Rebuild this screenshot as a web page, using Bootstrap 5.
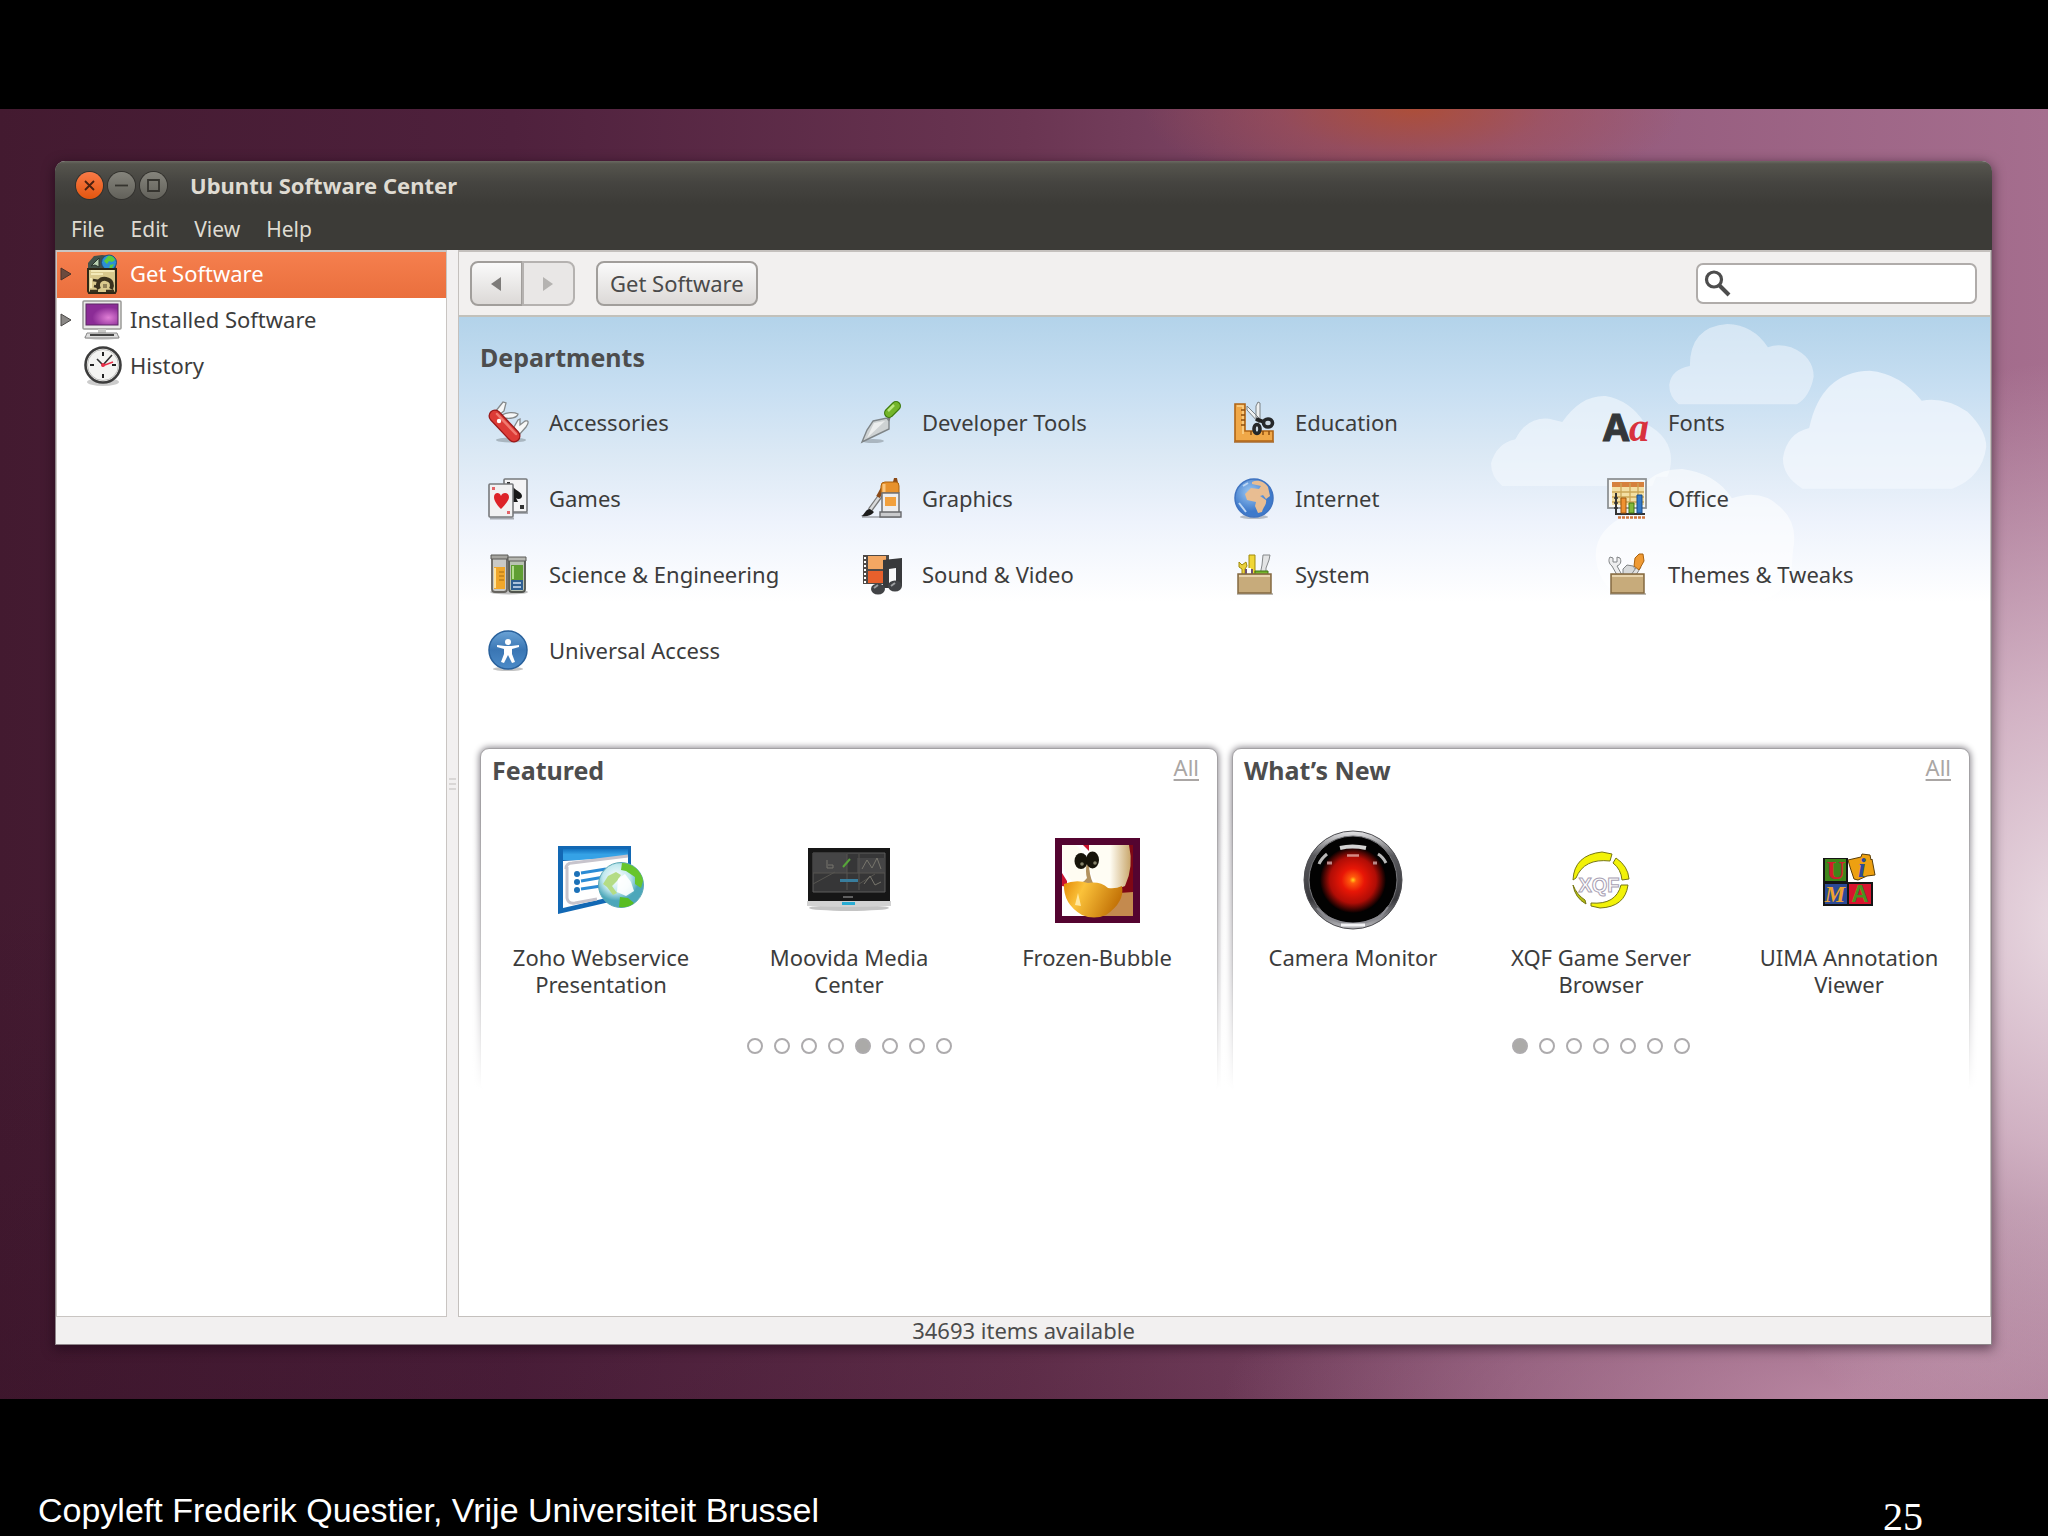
<!DOCTYPE html>
<html lang="en">
<head>
<meta charset="utf-8">
<meta name="viewport" content="width=device-width, initial-scale=1">
<title>Ubuntu Software Center</title>
<link href="https://cdn.jsdelivr.net/npm/bootstrap@5.3.0/dist/css/bootstrap.min.css" rel="stylesheet">
<style>
body { background: #000; color: #3c3c3c; font-family: "Noto Sans", "Open Sans", sans-serif; font-size: 22px; line-height: 27px; padding-top: 109px; }
a { color: inherit; text-decoration: none; }
svg { display: block; flex: none; overflow: visible; }
svg.sky { overflow: hidden; }
.wallpaper {
  padding: 52px 56px 54px 55px;
  background:
    radial-gradient(ellipse 270px 90px at 69% 0, rgba(176,78,52,.9), rgba(165,78,80,.5) 50%, transparent),
    radial-gradient(ellipse 420px 560px at 101% 63%, #e9dae2, rgba(222,196,210,.8) 40%, transparent),
    radial-gradient(ellipse 620px 200px at 90% 100%, rgba(196,146,172,.8), transparent),
    linear-gradient(180deg, transparent 60%, rgba(40,8,30,.2)),
    linear-gradient(90deg, #431a30 0, #4f213d 25%, #6a3552 50%, #92587a 74%, #a56e8e 100%);
}
.app-window { border-radius: 10px 10px 0 0; background: #f2f0f0; border: 1px solid #8f858a; border-top: 0; box-shadow: 0 3px 12px 1px rgba(20,0,15,.5); }
.app-head { background: linear-gradient(#6a6961 0, #55544d 3px, #454440 22px, #3c3b37 44px); border-radius: 10px 10px 0 0; color: #dfdbd2; margin: 0 -1px; }
.title-bar { height: 48px; padding-left: 21px; gap: 5px; }
.title-bar h1 { font-size: 22px; line-height: 27px; font-weight: 700; margin: 0 0 0 18px; }
.win-btn { width: 27px; height: 27px; border: 0; padding: 0; border-radius: 50%; background: linear-gradient(#85847c, #62615a); box-shadow: 0 0 0 1px #33322e; }
.win-btn.closer { background: linear-gradient(#f97a47, #e4560f); }
.menu-bar { height: 41px; padding-left: 16px; gap: 26px; }
.menu-bar a { font-size: 21px; }
.side-pane { width: 391px; border: 2px solid #c9c5c2; border-width: 2px 1px 1px 1px; background: #fff; }
.side-row { height: 46px; padding: 0 0 3px 3px; gap: 10px; }
.side-row .side-name { margin-left: -2px; }
.side-row.chosen { background: linear-gradient(#f57f4e, #ea6f3d); color: #fff; }
.twist { width: 12px; }
.splitter { width: 11px; }
.main-pane { flex: 1 1 0; min-width: 0; border: 1px solid #c4c0bd; border-width: 2px 1px 1px 1px; background: #fff; }
.tool-bar { height: 65px; padding: 0 13px 0 11px; gap: 21px; border-bottom: 2px solid #c2c1bb; background: #f2f0ef; }
.tool-btn { height: 45px; border: 2px solid #a19e9b; border-radius: 8px; background: linear-gradient(#fafafa, #dcd9d7); color: #4a4a4a; font-size: 22px; line-height: 27px; padding: 0 12px; }
.nav-pair .tool-btn { width: 53px; padding: 0 18px; }
.nav-pair .tool-btn:disabled { background: #e9e7e6; border-color: #b5b2b0; opacity: 1; }
.search-wrap { width: 281px; }
.search-wrap input { height: 41px; padding: 0 10px 0 44px; border: 2px solid #b0acaa; border-radius: 7px; font-size: 22px; background: #fff; }
.search-wrap svg { position: absolute; left: 8px; top: 7px; }
.store { background: linear-gradient(#b3d3ea 0, #c8dff2 74px, #dce9f5 140px, #eef3fc 205px, #fff 285px); }
.sky { position: absolute; right: 0; top: 0; }
.store h2 { font-size: 25px; line-height: 32px; font-weight: 700; color: #4d4d4d; margin: 0; }
.departments { padding: 24px 10px 0 21px; height: 431px; }
.departments ul { padding-left: 8px; margin-top: 11px; }
.departments li a { height: 76px; gap: 20px; }
.shelves { gap: 14px; padding: 0 20px 0 21px; }
.shelf { height: 345px; flex: 1 1 0; border: 1px solid #a3a1a4; border-radius: 9px; box-shadow: 0 0 6px 1px #8f8c92; background: #fff; }
.shelf::after { content: ""; position: absolute; inset: 60px -12px -12px; background: linear-gradient(rgba(255,255,255,0), rgba(255,255,255,.45) 55%, #fff 95%); }
.shelf > * { position: relative; z-index: 1; }
.shelf-head { padding: 5px 18px 0 11px; }
.shelf-head a { color: #aaa6a4; text-decoration: underline; text-underline-offset: 3px; line-height: 26px; }
.picks { --bs-gutter-x: 8px; margin-top: 43px; }
.picks .art { height: 102px; margin-bottom: 13px; }
.picks .label-text { height: 54px; }
.pager { gap: 11px; margin-top: 40px; }
.pager button { width: 16px; height: 16px; border-radius: 50%; border: 2px solid #adabad; background: #fff; padding: 0; }
.pager button.now { background: #abaaa8; }
.status { height: 27px; font-size: 22px; line-height: 27px; color: #4c4c4c; }
.slide-foot { height: 137px; color: #fff; padding: 0 125px 0 38px; }
.slide-foot .credit { font: 34px/40px "Liberation Sans", Arial, sans-serif; padding-top: 91px; }
.slide-foot .page-no { font: 40px/46px "Liberation Serif", serif; padding-top: 95px; }
</style>
</head>
<body class="min-vh-100 d-flex flex-column">

<div class="wallpaper flex-grow-1 d-flex">
<main class="app-window flex-grow-1 d-flex flex-column">
  <header class="app-head">
    <div class="title-bar d-flex align-items-center">
      <button class="win-btn closer" aria-label="Close"><svg width="27" height="27" viewBox="0 0 27 27"><path d="M9 9l9 9M18 9l-9 9" stroke="#4a2010" stroke-width="1.8"/></svg></button>
      <button class="win-btn" aria-label="Minimize"><svg width="27" height="27" viewBox="0 0 27 27"><path d="M7 13.500h13" stroke="#35342f" stroke-width="1.8"/></svg></button>
      <button class="win-btn" aria-label="Maximize"><svg width="27" height="27" viewBox="0 0 27 27"><path d="M8 8h11v11H8z" fill="none" stroke="#35342f" stroke-width="1.8"/></svg></button>
      <h1>Ubuntu Software Center</h1>
    </div>
    <nav class="menu-bar d-flex align-items-center">
      <a href="#">File</a><a href="#">Edit</a><a href="#">View</a><a href="#">Help</a>
    </nav>
  </header>

  <div class="d-flex flex-grow-1">
    <nav class="side-pane flex-shrink-0">
      <a href="#" class="side-row chosen d-flex align-items-center">
        <svg class="twist" width="12" height="14" viewBox="0 0 12 14"><path d="M1 1l10 6-10 6z" fill="#6b4a3e" stroke="#4a332b"/></svg>
        <svg width="40" height="42" viewBox="0 0 40 42"><path d="M6 10l6-7 8-1 10 1 4 5v9H6z" fill="#42524a"/><circle cx="27" cy="9.500" r="7.500" fill="#2c8fd6" stroke="#1d4c78"/><path d="M26 3c3-1 6 1 7 4l-3 2-3-1-2 3-3-3zM28 12l4-1-2 4-3 1z" fill="#5ccb3c"/><path d="M9 13l8-8v9l-4-2z" fill="#b8d0b0" stroke="#29352c"/><path d="M6 16h28v22l-1 2H7l-1-2z" fill="#d9c98d" stroke="#2e2817" stroke-width="2"/><path d="M9 18h23M9 21h12M9 25v10" stroke="#f3e9b8" stroke-width="2"/><path d="M17 36c-3-6 1-11 7-10s7 6 5 10" fill="none" stroke="#3a321e" stroke-width="4"/><path d="M11 27l6 1M12 33l4 1M8 38h8M24 38h8" stroke="#3a321e" stroke-width="2.500"/><path d="M21 33h4" stroke="#8f8158" stroke-width="4"/></svg>
        <span class="side-name">Get Software</span>
      </a>
      <a href="#" class="side-row d-flex align-items-center">
        <svg class="twist" width="12" height="14" viewBox="0 0 12 14"><path d="M1 1l10 6-10 6z" fill="#8a8886" stroke="#4a4846"/></svg>
        <svg width="40" height="42" viewBox="0 0 40 42"><defs><radialGradient id="scr" cx=".7" cy=".65"><stop offset="0" stop-color="#e07fd6"/><stop offset="1" stop-color="#8b2c96"/></radialGradient></defs><ellipse cx="20" cy="38" rx="18" ry="3" fill="#d8d8d8"/><rect x="1" y="2" width="38" height="28" rx="1" fill="#e9e9e7" stroke="#9a9a98" stroke-width="1.500"/><rect x="4" y="5" width="32" height="21" fill="url(#scr)" stroke="#5d2765"/><path d="M16 30h8v4h-8z" fill="#c9c9c7"/><path d="M5 34h30l2 5H3z" fill="#ddd" stroke="#888"/><path d="M8 36h24" stroke="#444" stroke-width="2"/></svg>
        <span class="side-name">Installed Software</span>
      </a>
      <a href="#" class="side-row d-flex align-items-center">
        <span class="twist"></span>
        <svg width="40" height="42" viewBox="0 0 40 42"><ellipse cx="21" cy="37" rx="16" ry="4" fill="#ccc"/><circle cx="21" cy="20" r="17.500" fill="#f4f4f2" stroke="#3c3c3c" stroke-width="2.600"/><circle cx="21" cy="20" r="15.500" fill="none" stroke="#bdbdbb"/><path d="M21 7v4M21 29v4M8 20h4M30 20h4" stroke="#222" stroke-width="2"/><path d="M15 14l6 6 9-10" fill="none" stroke="#333" stroke-width="1.600"/><path d="M20 21l11-4" stroke="#e8304a" stroke-width="1.600"/><circle cx="21" cy="20" r="2" fill="#e8304a"/></svg>
        <span class="side-name">History</span>
      </a>
    </nav>

    <div class="splitter flex-shrink-0 d-flex align-items-center justify-content-center">
      <svg width="7" height="14" viewBox="0 0 7 14"><path d="M0 2h7M0 7h7M0 12h7" stroke="#c0bdbb"/></svg>
    </div>

    <section class="main-pane d-flex flex-column">
      <div class="tool-bar d-flex align-items-center">
        <div class="btn-group nav-pair" role="group" aria-label="History">
          <button class="btn tool-btn" aria-label="Back"><svg width="12" height="14" viewBox="0 0 12 14"><path d="M11 0v14L1 7z" fill="#7d7b79"/></svg></button>
          <button class="btn tool-btn" disabled aria-label="Forward"><svg width="12" height="14" viewBox="0 0 12 14"><path d="M1 0v14l10-7z" fill="#b5b3b1"/></svg></button>
        </div>
        <button class="btn tool-btn">Get Software</button>
        <div class="search-wrap position-relative ms-auto">
          <input type="search" class="form-control" aria-label="Search">
          <svg width="28" height="28" viewBox="0 0 28 28"><circle cx="10" cy="9.500" r="7.500" fill="none" stroke="#4d4d4d" stroke-width="3.200"/><path d="M15 15l10 10" stroke="#4d4d4d" stroke-width="4"/></svg>
        </div>
      </div>

      <div class="store flex-grow-1 position-relative">
        <svg class="sky" width="502" height="290" viewBox="72 261 1338 870" preserveAspectRatio="none" aria-hidden="true">
          <g fill="#f4f8fe">
            <path opacity=".52" d="M580 523Q555 500 555 465Q560 418 610 408Q610 290 710 282Q780 285 818 352Q845 340 880 352Q940 380 940 440Q930 500 895 523Z"/>
            <path opacity=".7" d="M910 776Q858 740 858 685Q868 610 928 594Q960 425 1090 422Q1170 430 1228 512Q1290 500 1350 545Q1400 600 1400 650Q1390 740 1310 776Z"/>
            <path opacity=".6" d="M110 768Q80 740 80 700Q95 640 145 628Q175 560 235 566L270 576Q320 495 385 498Q450 510 490 580Q560 620 560 690Q560 715 550 740L520 740L510 768Z"/>
            <path fill="#fff" opacity=".55" d="M360 990Q350 900 450 850Q480 715 590 717Q680 730 722 805Q800 775 850 830Q900 880 885 960L880 1040Q850 1100 800 1110H450Q370 1080 360 990Z"/>
          </g>
        </svg>

        <section class="departments position-relative">
          <h2>Departments</h2>
          <ul class="row gx-0 list-unstyled mb-0">
            <li class="col-3"><a href="#" class="d-flex align-items-center">
              <svg width="41" height="41" viewBox="0 0 41 41"><ellipse cx="23" cy="38" rx="15" ry="2.500" fill="#a9b6c0"/><g fill="#f6f7f7" stroke="#85898b" stroke-width="1.300"><path d="M7 10l8-10 3 1-2 8-5 4z"/><path d="M14 13c5-3 12-3 16-1-1 4-8 5-14 4z"/><path d="M26 25l4-7 2-1v6l5-4c4-1 4 2 1 6l-7 8z"/></g><path d="M7 14L26 34" stroke="#99191a" stroke-width="13" stroke-linecap="round"/><path d="M7 14L26 34" stroke="#dd3b36" stroke-width="10.500" stroke-linecap="round"/><path d="M9 12l19 20" stroke="#f17a70" stroke-width="2.500" stroke-linecap="round"/><circle cx="11" cy="19" r="2.200" fill="#fff"/></svg>
              <span>Accessories</span></a></li>
            <li class="col-3"><a href="#" class="d-flex align-items-center">
              <svg width="41" height="41" viewBox="0 0 41 41"><ellipse cx="12" cy="39" rx="11" ry="2" fill="#aab6c0"/><path d="M29 12l-2 7" stroke="#777" stroke-width="3"/><path d="M12 19l14-3 2 3v8L1 40 6 28z" fill="#ced2d3" stroke="#7e8487" stroke-width="1.400"/><path d="M13 21l11-2-18 17z" fill="#eceeee"/><path d="M28 11L35 4" stroke="#3c7a0c" stroke-width="10" stroke-linecap="round"/><path d="M28 11L35 4" stroke="#73b52a" stroke-width="7.500" stroke-linecap="round"/><path d="M27 9l6-6" stroke="#b9e67e" stroke-width="2.500"/></svg>
              <span>Developer Tools</span></a></li>
            <li class="col-3"><a href="#" class="d-flex align-items-center">
              <svg width="41" height="41" viewBox="0 0 41 41"><path d="M0 40h40" stroke="#b48b62" stroke-width="2"/><path d="M1 2h10v27h28v10H1z" fill="#f0a848" stroke="#b06414" stroke-width="1.600"/><path d="M3 4h6v28" fill="none" stroke="#fbd48c" stroke-width="1.500"/><path d="M7 8h4M7 13h4M7 18h4M7 23h4M17 29v4M23 29v4M29 29v4M35 29v4" stroke="#8c4e0f" stroke-width="1.500"/><path d="M13 4l14 14-2 3L13 8zM24 0l2 1v17l-4 1V4z" fill="#eff1f1" stroke="#7b8184"/><path d="M22 17l8 3" stroke="#222" stroke-width="4"/><ellipse cx="34" cy="21" rx="4.500" ry="4" fill="#ccd8e2" stroke="#26282a" stroke-width="3.600"/><ellipse cx="23" cy="27" rx="3" ry="4.500" fill="#ccd8e2" stroke="#26282a" stroke-width="3.600"/></svg>
              <span>Education</span></a></li>
            <li class="col-3"><a href="#" class="d-flex align-items-center">
              <svg width="41" height="41" viewBox="0 0 41 41"><text x="22" y="39" font-family="Liberation Serif, serif" font-style="italic" font-weight="700" font-size="40" fill="#d8323e">a</text><text x="-4" y="39" font-family="Noto Sans, sans-serif" font-weight="700" font-size="38" fill="#34373a" stroke="#34373a">A</text></svg>
              <span>Fonts</span></a></li>

            <li class="col-3"><a href="#" class="d-flex align-items-center">
              <svg width="41" height="41" viewBox="0 0 41 41"><path d="M2 40.500h24M25 35h15" stroke="#a7abb2" stroke-width="2"/><rect x="16" y="1" width="23" height="33" rx="1" fill="#f4f4f5" stroke="#77797c" stroke-width="1.600"/><path d="M25 9c3 4 9 5 9 9 0 3-4 4-6 2l2 4h-5z" fill="#171717"/><path d="M32 27h4v4h-4zM19 4h3v2h-3z" fill="#333"/><rect x="1" y="6" width="24" height="33" rx="1" fill="#f1f1f2" stroke="#77797c" stroke-width="1.600"/><path d="M13 31C8 26 6 22 6 19c0-5 6-5 7-1 1-4 8-4 8 1 0 3-3 7-8 12z" fill="#dd2328"/><path d="M4 9h3v3H4zM19 33h3v3h-3z" fill="#e46468"/></svg>
              <span>Games</span></a></li>
            <li class="col-3"><a href="#" class="d-flex align-items-center">
              <svg width="41" height="41" viewBox="0 0 41 41"><path d="M1 39h38" stroke="#b2b6bd" stroke-width="2"/><path d="M20 17L9 32" stroke="#777" stroke-width="5"/><path d="M19 18L9 32" stroke="#d9dadb" stroke-width="2.500"/><path d="M22 10l-5 9" stroke="#8a4a18" stroke-width="4"/><path d="M0 38c4-1 4-7 9-7l4 3c-3 4-8 5-13 4z" fill="#1c1c1c"/><path d="M32 4l1-4h3l1 5z" fill="#8b4a16"/><path d="M20 8q0-4 4-4h11q3 0 3 4v7H20z" fill="#e7912c" stroke="#a9610f"/><path d="M23 6v8" stroke="#f9c57d" stroke-width="3"/><path d="M21 15h17v20H21z" fill="#ededee" stroke="#707275" stroke-width="1.500"/><path d="M24 19h11v9H24z" fill="#f2a03c"/><path d="M19 34h21v5H19z" fill="#c9cacc" stroke="#68696c" stroke-width="1.400"/></svg>
              <span>Graphics</span></a></li>
            <li class="col-3"><a href="#" class="d-flex align-items-center">
              <svg width="41" height="41" viewBox="0 0 41 41"><defs><radialGradient id="sea" cx=".4" cy=".35"><stop offset="0" stop-color="#9cc8f2"/><stop offset="1" stop-color="#3f7acb"/></radialGradient></defs><ellipse cx="20" cy="39" rx="14" ry="2" fill="#b5bcc6"/><circle cx="20" cy="20" r="19" fill="url(#sea)" stroke="#3f73c0" stroke-width="1.500"/><path d="M18 4c6-3 13 0 16 5l2 9-4 3-3-4-3 1 6 4c1 5-3 7-4 12l-4 1-3-7 1-4-9-2-2-6 6-6 8 1 2-3-9-2z" fill="#e8bd92"/><path d="M5 25l7 9M9 8l5-3" stroke="#bcd6f4" stroke-width="2"/></svg>
              <span>Internet</span></a></li>
            <li class="col-3"><a href="#" class="d-flex align-items-center">
              <svg width="41" height="41" viewBox="0 0 41 41"><rect x="1" y="1" width="38" height="29" fill="#f6f6f3" stroke="#8e9294" stroke-width="1.800"/><path d="M5 4h32v5H5z" fill="#d5803d"/><path d="M5 9h32v18H5z" fill="#f3dfa3"/><path d="M5 14h32M5 19h32M5 24h32M14 5v22M23 5v22M31 5v22" stroke="#cba657" stroke-width="1.300"/><path d="M9 15v21h29" fill="none" stroke="#333" stroke-width="2"/><path d="M7 20h4M7 25h4M7 30h4" stroke="#333" stroke-width="1.500"/><path d="M14 20h5v15h-5z" fill="#ef9232" stroke="#a2560d"/><path d="M22 25h5v10h-5z" fill="#83b93c" stroke="#427711"/><path d="M30 17h5v18h-5z" fill="#3279c8" stroke="#174c8b"/><path d="M11 39.500h28" stroke="#d0763c" stroke-width="2.500" stroke-dasharray="3 1"/></svg>
              <span>Office</span></a></li>

            <li class="col-3"><a href="#" class="d-flex align-items-center">
              <svg width="41" height="41" viewBox="0 0 41 41"><ellipse cx="21" cy="38" rx="19" ry="2.500" fill="#c0c0c0"/><path d="M4 2h15v33q0 3-3 3H7q-3 0-3-3z" fill="#c9c9c6" stroke="#66645f" stroke-width="1.800"/><path d="M6 13h11v22H6z" fill="#f0a72b"/><path d="M7 14v20" stroke="#ffe39b" stroke-width="2"/><path d="M11 18h5M11 22h5M11 26h5" stroke="#a66d12"/><path d="M3 1h17v4H3z" fill="#a5a49f" stroke="#5b5a56"/><path d="M21 4h16v31q0 3-3 3H24q-3 0-3-3z" fill="#b9c2b3" stroke="#50544e" stroke-width="1.800"/><path d="M23 11h12v15H23z" fill="#5f9e33"/><path d="M25 12v13" stroke="#b0dc8a" stroke-width="2"/><path d="M23 26h12v10H23z" fill="#2e5f91"/><path d="M25 29h8M25 33h8" stroke="#d5e4f3" stroke-width="1.500"/><path d="M20 3h18v4H20z" fill="#b6b7b1" stroke="#5b5a56"/></svg>
              <span>Science &amp; Engineering</span></a></li>
            <li class="col-3"><a href="#" class="d-flex align-items-center">
              <svg width="41" height="41" viewBox="0 0 41 41"><path d="M2 1h26v29H2z" fill="#4f4a47"/><path d="M7 2h18v13H7z" fill="#f3a763"/><path d="M7 17h18v12H7z" fill="#e8602c"/><path d="M4 3v26" stroke="#fff" stroke-width="2" stroke-dasharray="2 2"/><path d="M22 6l19-2v28h-6V14l-7 1v19h-6z" fill="#38393b"/><path d="M28 15h6v14h-6z" fill="#f8f8f8"/><ellipse cx="17" cy="35" rx="7" ry="5.500" fill="#414346"/><ellipse cx="34" cy="32" rx="7" ry="5.500" fill="#414346"/><path d="M13 34l4-3M30 32l4-3" stroke="#9c9ea0" stroke-width="2"/></svg>
              <span>Sound &amp; Video</span></a></li>
            <li class="col-3"><a href="#" class="d-flex align-items-center">
              <svg width="41" height="41" viewBox="0 0 41 41"><path d="M3 40h36" stroke="#bdbab4" stroke-width="2"/><path d="M15 1h6v19h-6z" fill="#f0d638" stroke="#a08b0c"/><path d="M5 8l3 3 4-3 1 4-2 3v6H8v-6L5 13z" fill="#ead03c" stroke="#a08b0c"/><path d="M29 1h7l-1 5-3 8v7h-6l2-10z" fill="#e3e4e5" stroke="#85888a"/><path d="M11 15h8v6h-8z" fill="#6d5175"/><path d="M13 14h4v6h-4z" fill="#fff"/><path d="M21 17h13v4H21z" fill="#74b42c" stroke="#3e7410"/><path d="M4 20h33v19H4z" fill="#c7ab7b" stroke="#846a41" stroke-width="1.500"/><path d="M5 22h31" stroke="#e8d4ae" stroke-width="2"/></svg>
              <span>System</span></a></li>
            <li class="col-3"><a href="#" class="d-flex align-items-center">
              <svg width="41" height="41" viewBox="0 0 41 41"><path d="M3 40h36" stroke="#bdbab4" stroke-width="2"/><path d="M3 3l3 1v4h4V3l3 1c2 4 0 7-3 8l5 9h-5L5 12C2 10 1 6 3 3z" fill="#ededee" stroke="#818486"/><path d="M16 21v-6l4-4 6 1 3 4v5z" fill="#d7d9da" stroke="#808385"/><path d="M24 21l7-10 3 2-5 8z" fill="#e0e1e2" stroke="#888"/><path d="M27 12l1-8 4-4h4l1 7-5 9z" fill="#ef9a34" stroke="#a96210"/><path d="M4 20h33v19H4z" fill="#c7ab7b" stroke="#846a41" stroke-width="1.500"/><path d="M5 22h31" stroke="#e8d4ae" stroke-width="2"/></svg>
              <span>Themes &amp; Tweaks</span></a></li>

            <li class="col-3"><a href="#" class="d-flex align-items-center">
              <svg width="41" height="41" viewBox="0 0 41 41"><defs><linearGradient id="ua" x2="0" y2="1"><stop offset="0" stop-color="#6aa3d6"/><stop offset=".5" stop-color="#3a76b4"/><stop offset="1" stop-color="#4c8bc8"/></linearGradient></defs><ellipse cx="20" cy="39" rx="15" ry="2" fill="#c4c4c4"/><circle cx="20" cy="20" r="19" fill="url(#ua)" stroke="#28609b" stroke-width="1.500"/><circle cx="20" cy="12" r="3" fill="#fff"/><path d="M9 15l8 1h6l8-1v2l-7 2v5l3 8-3 1-4-8-4 8-3-1 3-8v-5l-7-2z" fill="#fff"/></svg>
              <span>Universal Access</span></a></li>
          </ul>
        </section>

        <div class="shelves d-flex position-relative">
          <section class="shelf position-relative">
            <div class="shelf-head d-flex justify-content-between"><h2>Featured</h2><a href="#">All</a></div>
            <div class="picks row text-center">
              <a href="#" class="col-4">
                <span class="art d-flex align-items-center justify-content-center">
                  <svg width="86" height="70" viewBox="0 0 86 70"><defs><linearGradient id="zb" x2="0" y2="1"><stop offset="0" stop-color="#1373c0"/><stop offset=".5" stop-color="#35a2e6"/></linearGradient><radialGradient id="zg" cx=".4" cy=".35"><stop offset="0" stop-color="#fff"/><stop offset=".6" stop-color="#c2e9ee"/><stop offset="1" stop-color="#4ca7ba"/></radialGradient></defs><path d="M0 1h73v51L0 69z" fill="#1268b4"/><path d="M5 4h65v11H5z" fill="url(#zb)"/><path d="M5 16l65-4v36L5 63z" fill="#fff"/><path d="M8 24q0-6 6-6l56-7M9 22v31q1 6 8 5l22-4" fill="none" stroke="#c7c4cc" stroke-width="3"/><path d="M23 28l25-4M23 36l23-4M23 44l20-3" stroke="#2b8bd4" stroke-width="3"/><circle cx="19" cy="29" r="3" fill="#1c71b8"/><circle cx="19" cy="37" r="3" fill="#1c71b8"/><circle cx="19" cy="45" r="3" fill="#1c71b8"/><circle cx="63" cy="40" r="22.500" fill="url(#zg)" stroke="#5aa7b5"/><path d="M64 18c10 0 20 8 21 18l-2 7-6-4 0-7-9-6-5-1z" fill="#67c52d"/><path d="M50 31l8-4 5 3-4 6-5 5 5 7-4 2-6-8-4-3z" fill="#b4dc85"/><path d="M62 52l8 1 6 5c-4 4-10 5-15 4z" fill="#58bd22"/><path d="M60 34l7-5 6 8 3 9-8 5-9-4z" fill="#fff" opacity=".9"/></svg>
                </span><span class="label-text d-block">Zoho Webservice<br>Presentation</span></a>
              <a href="#" class="col-4">
                <span class="art d-flex align-items-center justify-content-center">
                  <svg width="84" height="68" viewBox="0 0 84 68"><ellipse cx="42" cy="62" rx="40" ry="3" fill="#c4c4c4"/><path d="M1 2h82v53H1z" fill="#161616"/><path d="M6 7h72v39H6z" fill="#363637" stroke="#5d5d5d"/><path d="M6 7h34v20H6zM50 12h28v15H50z" fill="#454546"/><path d="M6 27h72M40 8v36M52 8v36M6 38l22-12M52 38l16-10" stroke="#565550"/><path d="M20 14v8h6v-3h-5M55 23l5-9 5 8 5-10 4 11M57 38l6-8 5 9 6-3" fill="none" stroke="#77756c"/><path d="M36 21l7-8" stroke="#57a63a" stroke-width="2"/><path d="M33 33h18v3H33z" fill="#397e9d"/><path d="M0 55h84v5q-42 2-84 0z" fill="#d2d2d2"/><path d="M36 51h10" stroke="#aaa"/><path d="M35 56h13v3H35z" fill="#29acd3"/></svg>
                </span><span class="label-text d-block">Moovida Media<br>Center</span></a>
              <a href="#" class="col-4">
                <span class="art d-flex align-items-center justify-content-center">
                  <svg width="85" height="85" viewBox="0 0 85 85"><defs><linearGradient id="beak" x2="1" y2=".3"><stop offset="0" stop-color="#e48a08"/><stop offset=".35" stop-color="#fbc23a"/><stop offset="1" stop-color="#c47408"/></linearGradient><linearGradient id="eye" x2="1"><stop offset=".5" stop-color="#fffdf4"/><stop offset="1" stop-color="#c9a76c"/></linearGradient></defs><path d="M0 0h85v85H0z" fill="#540430"/><path d="M7 7h71v71H7z" fill="#fff"/><path d="M60 7h18v50H60z" fill="#7f0715"/><path d="M7 35l5 8 0 6-5-1zM28 7h8v8z" fill="#cc1230"/><path d="M64 55l14-1v24H45z" fill="#c48a4e"/><path d="M20 7q12 5 12 38l-15-2q-9-8-9-20L7 7z" fill="#fffcf2"/><path d="M32 24q-2 10 0 16-3 4-6 5h12q-4-8-4-21z" fill="#b3925f"/><path d="M34 7h40q5 22-4 41-12 6-25-2-10-6-11-19z" fill="url(#eye)"/><path d="M9 46q12-5 24-1 12-2 20 5 8 1 14-2 3 16-16 29-12 5-24 0Q8 66 9 46z" fill="url(#beak)"/><path d="M20 67l3-12 3 13z" fill="#ffe79f"/><ellipse cx="26" cy="23" rx="6.500" ry="8" fill="#17140a"/><ellipse cx="37.500" cy="22" rx="6.500" ry="8.500" fill="#17140a"/><circle cx="27" cy="26" r="1.800" fill="#86836a"/><circle cx="40" cy="25" r="1.800" fill="#86836a"/></svg>
                </span><span class="label-text d-block">Frozen-Bubble</span></a>
            </div>
            <div class="pager d-flex justify-content-center">
              <button aria-label="Page 1"></button><button aria-label="Page 2"></button><button aria-label="Page 3"></button><button aria-label="Page 4"></button><button class="now" aria-label="Page 5"></button><button aria-label="Page 6"></button><button aria-label="Page 7"></button><button aria-label="Page 8"></button>
            </div>
          </section>

          <section class="shelf position-relative">
            <div class="shelf-head d-flex justify-content-between"><h2>What’s New</h2><a href="#">All</a></div>
            <div class="picks row text-center">
              <a href="#" class="col-4">
                <span class="art d-flex align-items-center justify-content-center">
                  <svg width="100" height="100" viewBox="0 0 100 100"><defs><radialGradient id="hal"><stop offset="0" stop-color="#ffd21c"/><stop offset=".1" stop-color="#ff5a0c"/><stop offset=".35" stop-color="#e81606"/><stop offset=".7" stop-color="#b00d06"/><stop offset="1" stop-color="#050000"/></radialGradient><linearGradient id="rim" x2="0" y2="1"><stop offset="0" stop-color="#e6e6e8"/><stop offset=".25" stop-color="#5a5a5e"/><stop offset=".7" stop-color="#38383c"/><stop offset="1" stop-color="#b9b9bd"/></linearGradient></defs><circle cx="50" cy="50" r="49" fill="url(#rim)" stroke="#4b4b4f"/><circle cx="50" cy="50" r="44" fill="#020202" stroke="#77777b"/><circle cx="50" cy="50" r="33" fill="url(#hal)"/><path d="M37 18q12-3 26 0" fill="none" stroke="#d2d2d2" stroke-width="4"/><path d="M44 25.500h12" stroke="#d48a84" stroke-width="2.500"/><path d="M16 34q2-5 8-10M75 24q5 3 8 9" fill="none" stroke="#b8b8b8" stroke-width="3"/><path d="M24 33h5M70 33h4" stroke="#b98888" stroke-width="3"/><path d="M14 78l8 8q28 15 56 0l7-9" fill="none" stroke="#8a8a90" stroke-width="2"/><path d="M38 95h24" stroke="#f3f3f5" stroke-width="3"/></svg>
                </span><span class="label-text d-block">Camera Monitor</span></a>
              <a href="#" class="col-4">
                <span class="art d-flex align-items-center justify-content-center">
                  <svg width="58" height="58" viewBox="0 0 58 58"><g fill="#f2f208" stroke="#777712" stroke-width="1"><path d="M1 29Q2 4 30 1l10 2-2 7Q12 7 4 27z"/><path d="M44 7q12 8 13 21l-7 1q-1-11-9-17z"/><path d="M56 34q-3 22-28 23l-9-2v-3q25 2 30-18z"/><path d="M1 34q4 10 12 15l1 4Q3 47 1 34z" fill="#b4bd13"/></g><text x="27" y="41" text-anchor="middle" font-family="Liberation Sans, sans-serif" font-weight="700" font-size="20" fill="#fff" stroke="#a9a2b4" stroke-width="1">XQF</text></svg>
                </span><span class="label-text d-block">XQF Game Server<br>Browser</span></a>
              <a href="#" class="col-4">
                <span class="art d-flex align-items-center justify-content-center">
                  <svg width="52" height="52" viewBox="0 0 52 52"><path d="M0 4h25v24H0zM0 28h25v24H0zM24 28h26v24H24z" fill="#151515"/><path d="M2 5h21v22H2z" fill="#3f861a"/><path d="M2 30h22v20H2z" fill="#2c4a95"/><path d="M26 30h22v20H26z" fill="#d8142f"/><path d="M25 6l13-3 1-3 8 1 1 5 1-1 3 16-8 1-9 4-4-1-4-12z" fill="#eda011" stroke="#5b3e08"/><g font-weight="700" text-anchor="middle"><text x="13" y="25" font-family="Liberation Serif, serif" font-size="26" fill="#d11d2e">U</text><text x="39" y="23" font-family="Liberation Serif, serif" font-style="italic" font-size="28" fill="#2d4a99">i</text><text x="12" y="48" font-family="Liberation Serif, serif" font-style="italic" font-size="23" fill="#eda331">M</text><text x="37" y="48" font-family="Liberation Sans, sans-serif" font-size="24" fill="#4a9120">A</text></g></svg>
                </span><span class="label-text d-block">UIMA Annotation<br>Viewer</span></a>
            </div>
            <div class="pager d-flex justify-content-center">
              <button class="now" aria-label="Page 1"></button><button aria-label="Page 2"></button><button aria-label="Page 3"></button><button aria-label="Page 4"></button><button aria-label="Page 5"></button><button aria-label="Page 6"></button><button aria-label="Page 7"></button>
            </div>
          </section>
        </div>
      </div>
    </section>
  </div>
  <div class="status text-center">34693 items available</div>
</main>
</div>

<footer class="slide-foot d-flex justify-content-between">
  <div class="credit">Copyleft Frederik Questier, Vrije Universiteit Brussel</div>
  <div class="page-no">25</div>
</footer>
<script src="https://cdn.jsdelivr.net/npm/bootstrap@5.3.0/dist/js/bootstrap.bundle.min.js"></script>
</body>
</html>
